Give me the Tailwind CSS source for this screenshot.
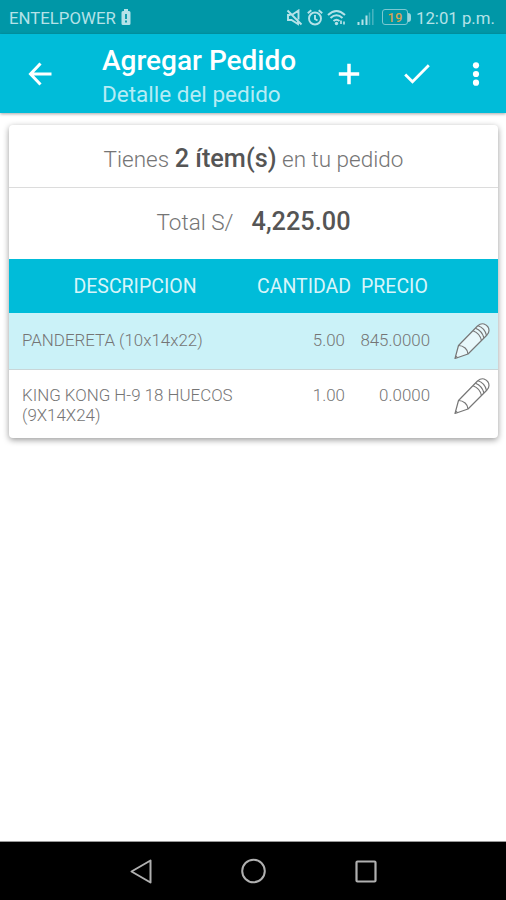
<!DOCTYPE html>
<html lang="es">

<head>
    <meta charset="UTF-8" />
    <meta name="viewport" content="width=device-width, initial-scale=1.0" />
    <title>Agregar Pedido</title>
    <script src="https://cdn.jsdelivr.net/npm/@tailwindcss/browser@4"></script>
</head>

<body class="bg-white font-['Roboto',sans-serif]">
    <div class="w-[506px] h-[900px] flex flex-col overflow-hidden">

        <!-- Status bar -->
        <div class="h-[34px] shrink-0 bg-[#0097a7] flex items-center pt-px pl-[9px] pr-[11px] text-[#b5e2e8]">
            <span class="pt-[2px] text-[16.8px] leading-none whitespace-nowrap w-[107px]">ENTELPOWER</span>
            <svg class="ml-[5px] w-[10px] h-[17px]" viewBox="0 0 10 17">
                <path d="M3 0h4v2h1q1.500 0 1.500 1.500v11q0 1.500-1.500 1.500H2Q.5 16 .5 14.500v-11Q.5 2 2 2h1z" fill="currentColor" />
                <path d="M5 5v5M5 11.500v2" stroke="#0097a7" stroke-width="1.800" />
            </svg>
            <div class="ml-auto flex items-center">
                <!-- Muted -->
                <svg class="w-[17px] h-[17px]" viewBox="0 0 17 17" fill="none" stroke="currentColor" stroke-width="1.900">
                    <path d="M1.500 1.500l14 14M6.500 5.500L12.500 1.500v9M4.500 6H2v5h3.500l6.500 4v-3" />
                </svg>
                <!-- Alarm -->
                <svg class="ml-1 w-[16px] h-[17px]" viewBox="0 0 16 17" fill="none" stroke="currentColor" stroke-width="1.900">
                    <circle cx="8" cy="9.500" r="6" />
                    <path d="M.8 4.200L4.300 1.200M15.200 4.200L11.700 1.200M8 6v4l2.500 1.500" />
                </svg>
                <!-- Wifi -->
                <svg class="ml-1 w-[20px] h-[17px]" viewBox="0 0 20 17" fill="none" stroke="currentColor" stroke-width="2">
                    <path d="M1 6q8.500-8 17 0M3.500 9q6-5.500 12 0M6.500 12q3-2.600 6 0" />
                    <circle cx="9.500" cy="14.500" r="1.700" fill="currentColor" stroke="none" />
                    <path d="M14 11.500v3.500M17 12.500v3" stroke-width="1.700" />
                </svg>
                <!-- Signal -->
                <svg class="ml-[10px] w-[17px] h-[16px]" viewBox="0 0 17 16" stroke="currentColor" stroke-width="2">
                    <path d="M1.500 13v3M5.500 10.500V16M9.500 6.500V16" />
                    <path d="M12.500 3.500V16M15.800 0V16" stroke-width="1.500" opacity=".4" />
                </svg>
                <!-- Battery -->
                <div class="ml-[8px] flex items-center">
                    <div class="w-[26px] h-[16px] rounded-[3px] border-[1.5px] border-[#7cc8d1] flex items-center justify-center text-[13px] font-medium leading-none text-[#d5a354]">19</div>
                    <div class="w-[3px] h-[9px] rounded-r-sm bg-[#9ad6dd]"></div>
                </div>
                <span class="ml-[5px] w-[79px] pt-[2px] text-[16.800px] leading-none whitespace-nowrap">12:01 p.m.</span>
            </div>
        </div>

        <!-- Toolbar -->
        <div class="relative z-10 h-[79px] shrink-0 bg-[#00bcd9] flex items-center text-white shadow-[0_1px_3px_rgba(0,0,0,0.35)]">
            <svg class="ml-[28px] w-[24px] h-[24px]" viewBox="0 0 24 24" fill="none" stroke="currentColor" stroke-width="3">
                <path d="M23.500 12H3M12.500 1.500L2.500 12l10 10.500" />
            </svg>
            <div class="ml-[50px] w-[234px] pt-[8px]">
                <h1 class="text-[28px] leading-[34px] font-medium whitespace-nowrap">Agregar Pedido</h1>
                <p class="text-[22.5px] leading-[33px] text-[#b6ecf5] whitespace-nowrap">Detalle del pedido</p>
            </div>
            <svg class="ml-[2px] w-[22px] h-[22px]" viewBox="0 0 22 22" stroke="currentColor" stroke-width="3.500">
                <path d="M11 .8v20.400M.8 11h20.400" />
            </svg>
            <svg class="ml-[44px] w-[26px] h-[20px]" viewBox="0 0 26 20" fill="none" stroke="currentColor" stroke-width="2.800">
                <path d="M1.200 10.500l7.300 7.300L24.800 1.300" />
            </svg>
            <svg class="ml-[42px] w-[8px] h-[24px]" viewBox="0 0 8 24" fill="currentColor">
                <circle cx="4" cy="3.300" r="3.100" />
                <circle cx="4" cy="12" r="3.100" />
                <circle cx="4" cy="20.700" r="3.100" />
            </svg>
        </div>

        <!-- Order card -->
        <main class="flex-1 pt-[12px] pl-[9px]">
            <div class="w-[489px] h-[313px] rounded-[4px] overflow-hidden bg-white text-[#757575] shadow-[0_2px_6px_rgba(0,0,0,0.4)]">
                <div class="h-[63px] border-b border-[#dcdcdc] flex items-baseline justify-center pt-[17px] text-[22.5px] font-light whitespace-pre">Tienes <span class="text-[25.3px] leading-[34px] font-medium text-[#555]">2 ítem(s)</span> en tu pedido</div>
                <div class="h-[71px] flex items-baseline justify-center pt-[17px] text-[22.5px] font-light">
                    <span>Total S/</span>
                    <span class="ml-[18px] text-[25.3px] leading-[34px] font-medium text-[#555]">4,225.00</span>
                </div>

                <div class="h-[54px] bg-[#00bcd9] flex items-center pt-[2px] text-[19.5px] text-[#d8f5fa] whitespace-nowrap">
                    <span class="w-[248px] pl-[4px] text-center">DESCRIPCION</span>
                    <span class="w-[94px] text-center">CANTIDAD</span>
                    <span class="ml-[10px]">PRECIO</span>
                </div>

                <div class="h-[57px] bg-[#cbf2f8] border-b border-[#c9d6d8] flex pl-[13px] pt-[17px] text-[16.9px] leading-[20px] font-light">
                    <span class="w-[230px]">PANDERETA (10x14x22)</span>
                    <span class="w-[93px] text-right">5.00</span>
                    <span class="w-[85px] text-right">845.0000</span>
                    <svg class="ml-[24px] -mt-[8px] w-[36px] h-[38px]" viewBox="0 0 36 38" fill="#e8f8fb" stroke="#777" stroke-width="1.200" stroke-linejoin="round">
                        <path d="M1 36.500L4.500 23.500 23.500 4Q27 1 30 2q5 2 5 6.500 0 2-2 4.500L14 32z" />
                        <path d="M4.500 23.500c5 0 9.500 4 9.500 8.500M19 8.700q7 2.500 8.500 10M21.500 6.300q6.500 2.500 8.500 9.700M24 3.800q6.500 2 8.500 9.500M1.500 34q1.500.5 2 2" fill="none" />
                    </svg>
                </div>

                <div class="h-[68px] flex pl-[13px] pt-[15px] text-[16.9px] leading-[20px] font-light">
                    <span class="w-[230px]">KING KONG H-9 18 HUECOS (9X14X24)</span>
                    <span class="w-[93px] text-right">1.00</span>
                    <span class="w-[85px] text-right">0.0000</span>
                    <svg class="ml-[24px] -mt-[8px] w-[36px] h-[38px]" viewBox="0 0 36 38" fill="#fff" stroke="#777" stroke-width="1.200" stroke-linejoin="round">
                        <path d="M1 36.500L4.500 23.500 23.500 4Q27 1 30 2q5 2 5 6.500 0 2-2 4.500L14 32z" />
                        <path d="M4.500 23.500c5 0 9.500 4 9.500 8.500M19 8.700q7 2.500 8.500 10M21.500 6.300q6.500 2.500 8.500 9.700M24 3.800q6.500 2 8.500 9.500M1.500 34q1.500.5 2 2" fill="none" />
                    </svg>
                </div>
            </div>
        </main>

        <!-- Navigation bar -->
        <nav class="h-[59px] shrink-0 bg-black border-t border-[#999] flex items-center text-[#b0b0b0]">
            <svg class="ml-[130px] w-[23px] h-[25px]" viewBox="0 0 23 25" fill="none" stroke="currentColor" stroke-width="2" stroke-linejoin="round">
                <path d="M20.500 1.500v22L1.500 12.500z" />
            </svg>
            <svg class="ml-[88px] w-[26px] h-[26px]" viewBox="0 0 26 26" fill="none" stroke="currentColor" stroke-width="2">
                <circle cx="12.500" cy="13" r="11.300" />
            </svg>
            <svg class="ml-[88px] w-[22px] h-[23px]" viewBox="0 0 22 23" fill="none" stroke="currentColor" stroke-width="2.200">
                <rect x="1.500" y="1.500" width="19" height="20" rx="1" />
            </svg>
        </nav>
    </div>
</body>

</html>
